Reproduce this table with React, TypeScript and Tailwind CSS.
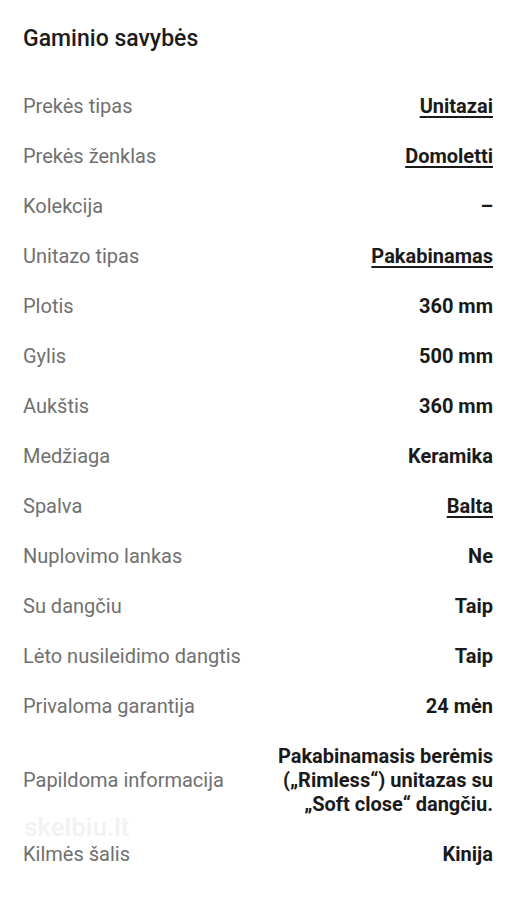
import React from 'react';

type Row = { label: string; value: React.ReactNode; link?: boolean };

const rows: Row[] = [
  { label: 'Prekės tipas', value: 'Unitazai', link: true },
  { label: 'Prekės ženklas', value: 'Domoletti', link: true },
  { label: 'Kolekcija', value: '–' },
  { label: 'Unitazo tipas', value: 'Pakabinamas', link: true },
  { label: 'Plotis', value: '360 mm' },
  { label: 'Gylis', value: '500 mm' },
  { label: 'Aukštis', value: '360 mm' },
  { label: 'Medžiaga', value: 'Keramika' },
  { label: 'Spalva', value: 'Balta', link: true },
  { label: 'Nuplovimo lankas', value: 'Ne' },
  { label: 'Su dangčiu', value: 'Taip' },
  { label: 'Lėto nusileidimo dangtis', value: 'Taip' },
  { label: 'Privaloma garantija', value: '24 mėn' },
  {
    label: 'Papildoma informacija',
    value: (
      <>
        Pakabinamasis berėmis
        <br />
        („Rimless“) unitazas su
        <br />
        „Soft close“ dangčiu.
      </>
    ),
  },
  { label: 'Kilmės šalis', value: 'Kinija' },
];

export default function App() {
  return (
    <div className="relative min-h-[900px] bg-white px-[23px] pt-[25px] font-['Roboto',sans-serif]">
      <h2 className="text-[23px] leading-[28px] font-medium text-[#1c1c1c]">Gaminio savybės</h2>

      <div className="mt-[28px] flex flex-col">
        {rows.map((r) => (
          <div key={r.label} className="flex items-center justify-between gap-4 py-[13px]">
            <span className="text-[20px] leading-[24px] text-[#707070]">{r.label}</span>
            <span
              className={`text-right text-[20px] leading-[24px] font-bold text-[#1a1a1a] ${
                r.link ? 'underline underline-offset-[3px] decoration-2' : ''
              }`}
            >
              {r.value}
            </span>
          </div>
        ))}
      </div>

      {/* watermark from the source photo */}
      <div className="pointer-events-none absolute left-[24px] top-[816px] text-[26px] leading-[22px] font-medium text-[#f2f2f2]">
        skelbiu.lt
      </div>
    </div>
  );
}
